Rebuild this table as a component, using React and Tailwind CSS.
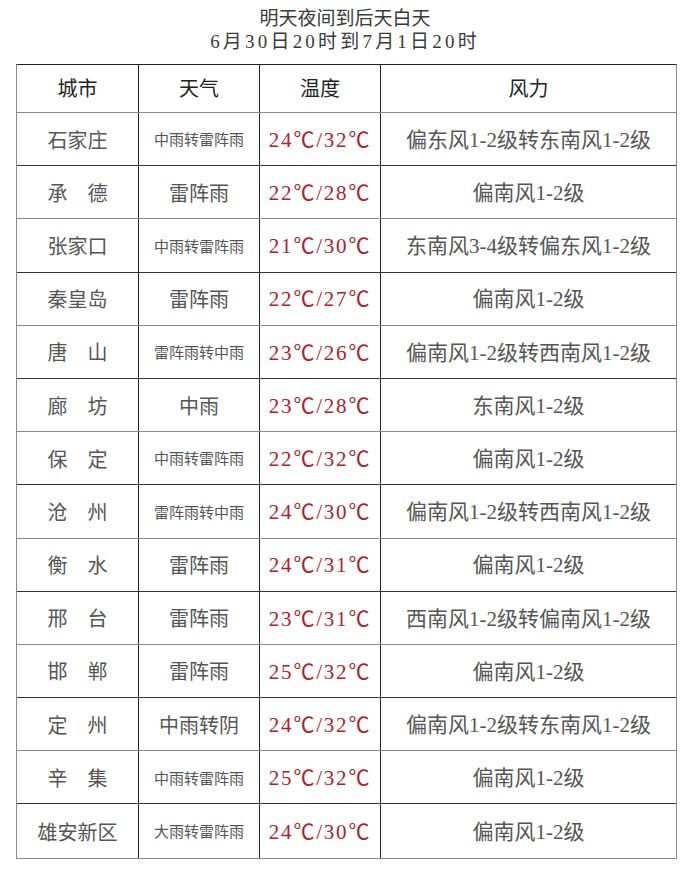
const rows = [
  ['石家庄', '中雨转雷阵雨', '24℃/32℃', '偏东风1-2级转东南风1-2级'],
  ['承　德', '雷阵雨', '22℃/28℃', '偏南风1-2级'],
  ['张家口', '中雨转雷阵雨', '21℃/30℃', '东南风3-4级转偏东风1-2级'],
  ['秦皇岛', '雷阵雨', '22℃/27℃', '偏南风1-2级'],
  ['唐　山', '雷阵雨转中雨', '23℃/26℃', '偏南风1-2级转西南风1-2级'],
  ['廊　坊', '中雨', '23℃/28℃', '东南风1-2级'],
  ['保　定', '中雨转雷阵雨', '22℃/32℃', '偏南风1-2级'],
  ['沧　州', '雷阵雨转中雨', '24℃/30℃', '偏南风1-2级转西南风1-2级'],
  ['衡　水', '雷阵雨', '24℃/31℃', '偏南风1-2级'],
  ['邢　台', '雷阵雨', '23℃/31℃', '西南风1-2级转偏南风1-2级'],
  ['邯　郸', '雷阵雨', '25℃/32℃', '偏南风1-2级'],
  ['定　州', '中雨转阴', '24℃/32℃', '偏南风1-2级转东南风1-2级'],
  ['辛　集', '中雨转雷阵雨', '25℃/32℃', '偏南风1-2级'],
  ['雄安新区', '大雨转雷阵雨', '24℃/30℃', '偏南风1-2级'],
];

const font = "font-['Liberation_Serif','Noto_Sans_CJK_SC',serif]";

export default function App() {
  return (
    <div className={`w-[690px] h-[892px] bg-white ${font}`}>
      <div className="pt-[7px] text-center text-[#3a3a3a] text-[19px] leading-[23px]">
        <div>明天夜间到后天白天</div>
        <div className="tracking-[3.2px]">6月30日20时到7月1日20时</div>
      </div>
      <div className="mt-[11px] ml-[16px] w-[661px] border border-[#8a8a8a] border-t-[#222]">
        <div className="grid grid-cols-[122px_121px_121px_1fr] h-[48px] border-b border-[#8a8a8a] text-[#222] text-[20px]">
          <div className="flex items-center justify-center border-r border-[#222]">城市</div>
          <div className="flex items-center justify-center border-r border-[#222]">天气</div>
          <div className="flex items-center justify-center border-r border-[#222]">温度</div>
          <div className="flex items-center justify-center">风力</div>
        </div>
        {rows.map((r, i) => (
          <div
            key={i}
            className={`grid grid-cols-[122px_121px_121px_1fr] h-[53.2px] ${i < rows.length - 1 ? (i % 2 ? 'border-b border-[#8a8a8a]' : 'border-b border-[#333]') : ''}`}
          >
            <div className="flex items-center justify-center pt-[3px] border-r border-[#222] text-[20px] text-[#555]">{r[0]}</div>
            <div className={`flex items-center justify-center pt-[3px] border-r border-[#222] text-[#555] ${r[1].length > 4 ? 'text-[15px]' : 'text-[20px]'}`}>
              {r[1]}
            </div>
            <div className="flex items-center justify-center pt-[3px] border-r border-[#222] text-[21px] tracking-[1.8px] text-[#b0202a]">{r[2]}</div>
            <div className="flex items-center justify-center pt-[3px] text-[21px] text-[#555]">{r[3]}</div>
          </div>
        ))}
      </div>
    </div>
  );
}
